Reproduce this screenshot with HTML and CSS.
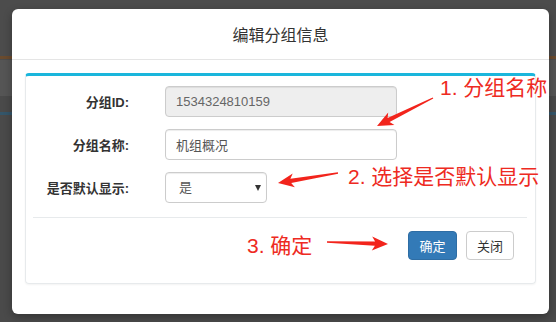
FILE: index.html
```html
<!DOCTYPE html>
<html lang="zh-CN">

<head>
    <meta charset="UTF-8">
    <title>编辑分组信息</title>
    <link rel="stylesheet" href="styles.css">
</head>

<body>
    <div class="backdrop">
        <div class="modal">
            <div class="modal-header">
                <h4 class="modal-title">编辑分组信息</h4>
            </div>
            <div class="modal-body">
                <div class="panel">
                    <form class="group-form">
                        <div class="form-row">
                            <label>分组ID:</label>
                            <input class="form-control input-id" value="1534324810159" disabled>
                        </div>
                        <div class="form-row">
                            <label>分组名称:</label>
                            <input class="form-control input-name" value="机组概况">
                        </div>
                        <div class="form-row">
                            <label>是否默认显示:</label>
                            <span class="select-wrap">
                                <select class="form-control select-default">
                                    <option>是</option>
                                    <option>否</option>
                                </select>
                            </span>
                        </div>
                        <hr class="divider">
                        <div class="form-actions">
                            <button type="button" class="btn btn-primary">确定</button>
                            <button type="button" class="btn btn-default">关闭</button>
                        </div>
                    </form>
                </div>
            </div>
        </div>

        <!-- annotations drawn over the screenshot -->
        <div class="note note-1">1. 分组名称</div>
        <div class="note note-2">2. 选择是否默认显示</div>
        <div class="note note-3">3. 确定</div>
        <svg class="arrows" width="556" height="322" viewBox="0 0 556 322">
            <polygon points="433.3,98.6 389.6,122.1 394.4,125.1 377,126 388.2,112.5 387.6,118.1 432.7,97.4" />
            <polygon points="338.1,173.7 291.2,183.1 294.9,187.3 278,183 292.7,173.5 290.4,178.7 337.9,172.3" />
            <polygon points="327,242.7 374.9,245.8 371.8,250.5 388,244 372.2,236.5 375.1,241.4 327,241.3" />
        </svg>
    </div>
</body>

</html>
```

FILE: styles.css
```css
html,
body {
    margin: 0;
    height: 100%;
}

body {
    font-family: 'Liberation Sans', 'Noto Sans CJK SC', sans-serif;
    font-size: 13px;
    color: #333;
    background:
        linear-gradient(to bottom,
            transparent 56px, #6a4b2e 56px, #6a4b2e 59px, transparent 59px,
            transparent 112px, #34566a 112px, #34566a 115px, transparent 115px),
        linear-gradient(to bottom,
            #4c4c4c 0, #4c4c4c 60px, #555 60px, #555 96px, #4a4a4a 96px);
}

.backdrop {
    position: relative;
    width: 556px;
    height: 322px;
    overflow: hidden;
}

.modal {
    margin: 9px 0 0 12px;
    width: 537px;
    background: #fff;
    border-radius: 6px;
    box-shadow: 0 3px 9px rgba(0, 0, 0, 0.3);
}

.modal-header {
    height: 50px;
    border-bottom: 1px solid #e5e5e5;
    display: flex;
    align-items: center;
    justify-content: center;
}

.modal-title {
    margin: 0;
    font-size: 16px;
    font-weight: normal;
    color: #333;
}

.modal-body {
    padding: 13px 13px 30px;
}

.panel {
    border: 1px solid #e7eaec;
    border-top: 3px solid #1ab6dc;
    border-radius: 4px;
    box-shadow: 0 1px 2px rgba(0, 0, 0, 0.05);
    padding: 10px 0 23px;
}

.group-form {
    display: flex;
    flex-direction: column;
    gap: 12px;
    margin: 0;
}

.form-row {
    display: grid;
    grid-template-columns: 103px auto;
    column-gap: 36px;
    align-items: center;
}

.form-row label {
    text-align: right;
    font-weight: bold;
    font-size: 13px;
    color: #333;
}

.form-control {
    box-sizing: border-box;
    height: 31px;
    border: 1px solid #ccc;
    border-radius: 4px;
    padding: 0 10px;
    font-family: inherit;
    font-size: 13px;
    color: #555;
    background: #fff;
    box-shadow: inset 0 1px 1px rgba(0, 0, 0, 0.075);
    outline: none;
}

.input-id,
.input-name {
    width: 232px;
}

.input-id {
    background: #eee;
    color: #666;
}

.select-wrap {
    position: relative;
    width: 102px;
}

.select-wrap::after {
    content: '';
    position: absolute;
    right: 6px;
    top: 13px;
    border-left: 3px solid transparent;
    border-right: 3px solid transparent;
    border-top: 6px solid #333;
}

.select-default {
    width: 102px;
    padding-left: 13px;
    appearance: none;
    -webkit-appearance: none;
}

.divider {
    margin: 2px 8px 1px 7px;
    border: 0;
    border-top: 1px solid #e7eaec;
}

.form-actions {
    display: flex;
    justify-content: flex-end;
    gap: 9px;
    padding-right: 21px;
}

.btn {
    height: 29px;
    border-radius: 4px;
    border: 1px solid transparent;
    font-family: inherit;
    font-size: 13px;
    padding: 0 10px;
}

.btn-primary {
    width: 49px;
    background: #337ab7;
    border-color: #2e6da4;
    color: #fff;
}

.btn-default {
    width: 48px;
    background: #fff;
    border-color: #ccc;
    color: #333;
}

.note {
    position: absolute;
    font-size: 21px;
    line-height: 24px;
    color: #ee2a22;
    white-space: nowrap;
}

.note-1 {
    left: 440px;
    top: 76px;
}

.note-2 {
    left: 348px;
    top: 165px;
}

.note-3 {
    left: 247px;
    top: 234px;
}

.arrows {
    position: absolute;
    left: 0;
    top: 0;
    fill: #f2241c;
}
```
